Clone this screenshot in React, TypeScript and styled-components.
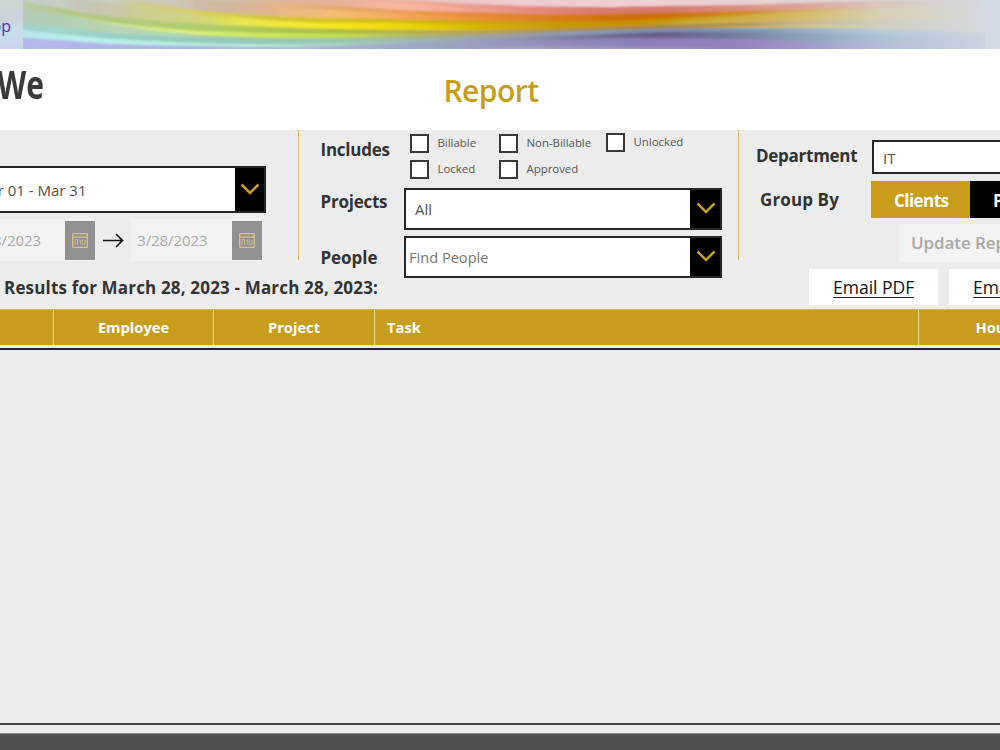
import React from 'react';
import styled, { createGlobalStyle } from 'styled-components';

const GOLD = '#c89d1b';

const Global = createGlobalStyle`
  *, *::before, *::after { box-sizing: border-box; }
  html, body { margin: 0; padding: 0; }
  body { width: 1000px; height: 750px; overflow: hidden; background: #ececec;
    font-family: "Open Sans", "Noto Sans", sans-serif; color: #333; }
`;

const Page = styled.div`
  width: 1000px; height: 750px; overflow: hidden;
  display: flex; flex-direction: column; background: #ececec;
`;

/* ---------- banner ---------- */

const Banner = styled.header`
  display: grid; height: 49px; flex: none; overflow: hidden;
  > * { grid-area: 1 / 1; }
`;
const BannerArt = styled.svg`display: block; width: 1000px; height: 49px;`;
const BannerLink = styled.span`
  justify-self: start; width: 11px; display: flex; justify-content: flex-end;
  font-size: 16px; line-height: 22px; margin-top: 15px; color: #5a2db0;
`;

type Stop = [x: number, y: number, color: string, opacity?: number];

const bands: Stop[][] = [
  [[23, -3, '#c4cdc8'], [113, -3, '#cdcfc4'], [220, -3, '#cdc4b0'], [340, -3, '#dfbcac'], [500, -3, '#ecccd0'], [660, -3, '#efd0d3'], [800, -3, '#dfd4d5'], [900, -3, '#d6d8d8'], [985, -3, '#d4dadf']],
  [[60, -4, '#c0b49c', 0], [90, 0, '#c4bca0', .5], [130, 6, '#c8c4a4', .6], [200, 14, '#ccc49c', .5], [280, 16, '#d8bc94', 0]],
  [[170, -6, '#ccb09c', 0], [215, 1, '#ccb098', .6], [260, 4, '#d8b094', .5], [330, 8, '#e4b090', 0]],
  [[210, -6, '#d4b494', 0], [290, -3, '#deb49c'], [403, 0, '#f2b09c'], [450, 3, '#eea090'], [530, 6, '#e28c80'], [600, 7, '#d87c6e'], [660, 6, '#d67a6a'], [740, 5, '#dc8e7e'], [800, 3, '#dca498'], [880, 1, '#dac4ba'], [985, -1, '#d4dadf']],
  [[340, 2, '#f4b8a4', 0], [403, 3, '#f8b8a4', .9], [460, 7, '#f4aa94', .8], [530, 9, '#e8907c', .5], [600, 10, '#d87c6e', 0]],
  [[233, -2, '#dcb890', 0], [290, 3, '#e8b480', .9], [340, 6, '#e2a868'], [400, 10, '#e8a058'], [460, 12, '#e88c38'], [530, 14, '#dc8024'], [600, 14, '#d07410'], [660, 13, '#cc6e00'], [740, 11, '#d08a28'], [800, 9, '#d8a868'], [880, 6, '#d8ccb8'], [985, 2, '#d4dadf']],
  [[270, 8, '#f0c890', 0], [330, 10, '#f4c078', 1], [400, 13, '#f4a858', 1], [460, 16, '#f09840', .9], [560, 17, '#dc8020', 0]],
  [[110, -4, '#c8c89c', 0], [145, 2, '#d0cc80', .8], [187, 9, '#d8d060', .9], [233, 13, '#d4cc4c'], [300, 17, '#d4c430'], [340, 18, '#d8c41c'], [430, 20, '#d0b010'], [530, 21, '#c8a008'], [600, 21, '#c49400'], [660, 19, '#c89400'], [740, 15, '#ccac38'], [800, 12, '#d4bc64'], [880, 10, '#d6cfb4'], [985, 8, '#d4dadf']],
  [[120, 1, '#ccd094', 0], [150, 7, '#ccd090', .9], [187, 13, '#d0d488', .9], [233, 19, '#d8dc60', .9], [290, 24, '#e8e040', .4], [330, 26, '#f0e030', 0]],
  [[210, 13, '#ece848', 0], [245, 18, '#ece850', .9], [300, 22, '#f4e82c', 1], [340, 23, '#f8e41c', 1], [400, 23, '#ecd808', 1], [460, 24, '#dcc000', 1], [560, 25, '#c8a408', 0]],
  [[640, 22, '#b8a040', 0], [680, 21, '#c8ac40', .8], [760, 18, '#d0b060', .8], [860, 18, '#d8ccac', .5], [985, 18, '#d4dadf', 0]],
  [[23, 1, '#b8cca8'], [60, 8, '#b4c890'], [100, 15, '#b4c880'], [150, 20, '#b4cc78'], [200, 24, '#b0cc70'], [270, 27, '#acc850'], [340, 29, '#a8bc48'], [430, 30, '#b8ac50'], [500, 30, '#b89c5c'], [580, 28, '#b08c50'], [660, 25, '#a88450'], [740, 23, '#b09458'], [800, 21, '#c8b890'], [880, 20, '#d0cdc0'], [985, 22, '#d4dadf']],
  [[45, 10, '#c8e0a0', 0], [90, 19, '#c8e0a0', .9], [150, 27, '#d4ec84', 1], [200, 31, '#d8f078', 1], [270, 33, '#d0e858', 1], [340, 33.5, '#c8dc50', 1], [430, 33, '#b8b860', .6], [500, 33, '#a8a080', 0]],
  [[690, 26, '#d0b040', 0], [740, 26, '#d0b440', .8], [840, 26, '#d8d898', .8], [920, 28, '#d8dcc0', 0]],
  [[23, 8, '#b4ccb8'], [60, 14, '#b4ccb4'], [113, 25, '#b8d4b4'], [160, 31, '#b4d8b0'], [200, 35, '#a8d0a8'], [260, 37.5, '#98c4a0'], [340, 38, '#9cc494'], [430, 36, '#a0b098'], [500, 34, '#9ca0a0'], [580, 31, '#8898b0'], [660, 29, '#7890b4'], [740, 28, '#7c94b4'], [800, 28, '#98acc4'], [880, 29, '#b8c8d8'], [985, 33, '#ccd4e0']],
  [[23, 24, '#a4d0cc'], [60, 27, '#a0d4cc'], [113, 33, '#98d0c8'], [180, 37, '#94ccc0'], [260, 39, '#94c8b8'], [340, 39, '#98c8ac'], [430, 39, '#9cb8b0', .6], [500, 38, '#9ca8b0', 0]],
  [[23, 30, '#b8e4e8'], [60, 34, '#b8ecec'], [113, 39, '#b8f0e8'], [200, 43, '#b8f0dc'], [280, 44, '#b4e8d0'], [340, 43, '#a8d0bc'], [430, 40, '#9cb0b8'], [500, 38, '#9498b4'], [580, 35, '#787898'], [660, 32, '#685c88'], [740, 32, '#74809e'], [800, 33, '#8ca2b6'], [880, 35, '#b0c0d4'], [985, 38, '#ccd4e0']],
  [[23, 38, '#b4b8e8'], [60, 40, '#b4b8ec'], [113, 44, '#b0b4e8'], [200, 46, '#acb0e4'], [280, 47, '#b0b4e4'], [340, 46, '#a8b0d4'], [430, 42, '#9ca8c0'], [500, 40, '#9898bc'], [580, 39, '#8c84b8'], [660, 38, '#8c7cb8'], [740, 39, '#9484bc'], [800, 41, '#a098c8'], [880, 44, '#b4bcd8'], [985, 47, '#ccd4e0']],
  [[440, 49, '#a0a8bc', 0], [520, 46, '#a4a8bc', .8], [620, 46, '#9c98b8', .8], [680, 47, '#a8a0b8', .6], [760, 49, '#948cc0', 0]],
];

function bandPath(pts: Stop[]) {
  let d = `M${pts[0][0]} 52L${pts[0][0]} ${pts[0][1]}`;
  for (let i = 0; i < pts.length - 1; i++) {
    const a = pts[Math.max(0, i - 1)], b = pts[i], c = pts[i + 1], e = pts[Math.min(pts.length - 1, i + 2)];
    d += `C${b[0] + (c[0] - b[0]) / 3} ${b[1] + ((c[1] - a[1]) / (c[0] - a[0])) * (c[0] - b[0]) / 3} ${c[0] - (c[0] - b[0]) / 3} ${c[1] - ((e[1] - b[1]) / (e[0] - b[0])) * (c[0] - b[0]) / 3} ${c[0]} ${c[1]}`;
  }
  return `${d}V52Z`;
}

function Waves() {
  return (
    <BannerArt viewBox="0 0 1000 49">
      <defs>
        <filter id="soft" x="0" y="-10%" width="100%" height="120%"><feGaussianBlur stdDeviation="0.5 0.8" /></filter>
        <linearGradient id="left" x2="0" y2="1">
          <stop offset="0" stopColor="#ccd6d4" /><stop offset=".4" stopColor="#ccd2da" />
          <stop offset=".65" stopColor="#c6dfea" /><stop offset="1" stopColor="#cbd2ea" />
        </linearGradient>
        <clipPath id="middle"><rect x="23" width="962" height="49" /></clipPath>
        {bands.map((b, i) => {
          const x0 = b[0][0], x1 = b[b.length - 1][0];
          return (
            <linearGradient key={i} id={`band${i}`} gradientUnits="userSpaceOnUse" x1={x0} x2={x1} y1="0" y2="0">
              {b.map((s, j) => <stop key={j} offset={(s[0] - x0) / (x1 - x0)} stopColor={s[2]} stopOpacity={s[3] ?? 1} />)}
            </linearGradient>
          );
        })}
      </defs>
      <rect width="1000" height="49" fill="#d5dbe2" />
      <rect width="24" height="49" fill="url(#left)" />
      <g clipPath="url(#middle)">
        <g filter="url(#soft)">
          {bands.map((b, i) => <path key={i} d={bandPath(b)} fill={`url(#band${i})`} />)}
        </g>
      </g>
    </BannerArt>
  );
}

/* ---------- title ---------- */

const TitleBar = styled.div`
  flex: none; height: 81px; background: #fff;
  display: grid; grid-template-columns: 400px 182px 1fr; align-items: start;
`;
const Brand = styled.div`
  width: 44px; display: flex; justify-content: flex-end; white-space: nowrap;
  font-size: 39px; font-weight: 700; line-height: 50px; margin-top: 10px; color: #3a3a3a;
  transform: scaleX(.77); transform-origin: right;
`;
const Title = styled.h1`
  margin: 19px 0 0; text-align: center; font-size: 30px; line-height: 46px;
  font-weight: 600; color: ${GOLD}; letter-spacing: -.5px;
`;

/* ---------- filters ---------- */

const Filters = styled.section`
  flex: none; height: 139px; display: grid; grid-template-columns: 299px 440px 1fr; align-items: start;
`;
const Column = styled.div<{ $divided?: boolean }>`
  height: 130px; display: flex; flex-direction: column;
  border-right: ${p => (p.$divided ? '1px solid #dcb95e' : 'none')};
`;
const Label = styled.div<{ $w: number; $top?: number; $track?: number }>`
  flex: none; width: ${p => p.$w}px; padding-top: ${p => p.$top ?? 0}px;
  font-size: 17px; line-height: 24px; font-weight: 700; letter-spacing: ${p => p.$track ?? -.24}px; white-space: nowrap;
`;
const Select = styled.div<{ $h: number }>`
  flex: none; height: ${p => p.$h}px; display: flex; background: #fff; border: 2px solid #262626;
`;
const Value = styled.div<{ $pad?: number; $muted?: boolean; $size?: number; $drop?: number }>`
  flex: 1; padding-left: ${p => p.$pad ?? 9}px; padding-top: ${p => p.$drop ?? 0}px; display: flex; align-items: center;
  font-size: ${p => p.$size ?? 15}px; line-height: 20px; color: ${p => (p.$muted ? '#777' : '#505050')}; white-space: pre;
`;
const Toggle = styled.div`
  width: 30px; background: #000; display: flex; justify-content: center; align-items: center;
  svg { display: block; margin: 0 0 2px 1px; }
`;
const Chevron = () => (
  <svg width="20" height="12" viewBox="0 0 20 12" fill="none" stroke={GOLD} strokeWidth="2.5">
    <path d="M1.5 1.5L10 10L18.5 1.5" />
  </svg>
);

const RangeSelect = styled(Select)`
  width: 266px; margin-top: 36px; border-left: 0;
  ${Toggle} { width: 29px; }
`;
const RangeValue = styled.div`
  width: 86.5px; display: flex; justify-content: flex-end; align-items: center; margin-right: auto;
  font-size: 15px; line-height: 20px; color: #505050; white-space: pre;
`;
const Dates = styled.div`display: flex; flex: none; align-items: center; margin-top: 6px; height: 42px;`;
const DateField = styled.div<{ $w: number; $text: number }>`
  width: ${p => p.$w}px; height: 42px; background: #f3f3f3; display: flex; align-items: center;
  > span { width: ${p => p.$text}px; display: flex; justify-content: flex-end; margin-right: auto;
    font-size: 15px; color: #aaa; white-space: nowrap; letter-spacing: -.08px; }
`;
const DateButton = styled.div`
  width: 30px; height: 39px; background: #919191; display: flex; align-items: center; justify-content: center;
`;
const CalendarIcon = () => (
  <svg width="16" height="15" viewBox="0 0 16 15" fill="none" stroke="#d6c48e" strokeWidth="1.3">
    <rect x=".7" y=".7" width="14.6" height="13.6" rx=".5" />
    <path d="M.6 4.1H15.4" />
    <path d="M3 12V6.5H5.5V12M7 7.2H8.7V12M10.3 6.5V11.5H13V6.5" strokeWidth="1" strokeDasharray="1.6 .5" />
  </svg>
);
const Arrow = styled.svg`width: 21px; height: 15px; margin: 0 7px 0 8px; flex: none;`;

const FilterRow = styled.div<{ $h: number; $gap?: number }>`
  flex: none; height: ${p => p.$h}px; margin-top: ${p => p.$gap ?? 0}px; padding-left: 21.5px; display: flex;
  ${Select} { width: 318px; }
`;
const Checks = styled.div`
  display: grid; grid-template-columns: 89px 107px 90px; grid-template-rows: 26px 26px; padding-top: 4px;
`;
const Check = styled.div<{ $dy?: number }>`
  display: flex; align-items: flex-start; margin-top: ${p => p.$dy ?? 0}px;
  font-size: 11.4px; line-height: 18px; color: #555; white-space: nowrap;
  &::before { content: ''; width: 19px; height: 19px; margin-right: 9px; background: #fff; border: 2px solid #383838; }
`;

const SideRow = styled.div<{ $pad: number; $gap: number; $h: number }>`
  flex: none; display: flex; padding-left: ${p => p.$pad}px; margin-top: ${p => p.$gap}px; height: ${p => p.$h}px;
`;
const DeptSelect = styled(Select)`width: 180px;`;
const Segment = styled.div<{ $on?: boolean }>`
  flex: none; width: 99px; height: 37px; display: flex; align-items: center; padding: 2px 0 0 23px;
  background: ${p => (p.$on ? GOLD : '#000')}; color: #fff;
  font-size: 17px; font-weight: 700; letter-spacing: -.55px;
`;
const Update = styled.div`
  flex: none; width: 150px; height: 38px; background: #f3f3f3; color: #a8a8a8; padding: 0 0 2px 12px;
  display: flex; align-items: center; font-size: 17px; font-weight: 600; letter-spacing: -.08px; white-space: nowrap;
`;

/* ---------- results ---------- */

const ResultsBar = styled.div`
  flex: none; height: 40px; display: flex; align-items: flex-start;
`;
const Summary = styled.h2`
  flex: none; margin: 7px 0 0 4px; width: 805px; font-size: 17px; line-height: 24px; font-weight: 700;
  letter-spacing: .17px; white-space: nowrap;
`;
const Export = styled.div<{ $w: number }>`
  flex: none; width: ${p => p.$w}px; height: 36px; margin-right: 11px; padding: 2px 0 0 24px; background: #fff;
  display: flex; align-items: center; color: #111; font-size: 17.5px; font-weight: 500; white-space: nowrap;
  span { border-bottom: 1px solid #222; line-height: 19px; height: 20px; }
`;

const TableHead = styled.div`
  flex: none; height: 36px; background: ${GOLD}; border-top: 1px solid #d6b65a;
  display: grid; grid-template-columns: 54px 160px 161px 543.5px 1fr;
  color: #fff; font-size: 14.7px; font-weight: 700; line-height: 35px;
`;
const Th = styled.div<{ $align?: 'left'; $pad?: number }>`
  border-right: 1px solid #e9d9a6; text-align: ${p => p.$align ?? 'center'};
  padding-left: ${p => p.$pad ?? 0}px; white-space: nowrap;
`;
const TableBody = styled.div`
  flex: none; height: 377px; margin-top: 3px; border-top: 2px solid #222; border-bottom: 2px solid #444;
`;
const Footer = styled.footer`
  flex: 1; margin-top: 8px; background: #505050; border-top: 1px solid #8e8e8e;
`;

export default function App() {
  return (
    <Page>
      <Global />
      <Banner>
        <Waves />
        <BannerLink>App</BannerLink>
      </Banner>
      <TitleBar>
        <Brand>We</Brand>
        <Title>Report</Title>
      </TitleBar>
      <Filters>
        <Column $divided>
          <RangeSelect $h={47}>
            <RangeValue>Mar 01 - Mar 31</RangeValue>
            <Toggle><Chevron /></Toggle>
          </RangeSelect>
          <Dates>
            <DateField $w={95} $text={41}><span>3/28/2023</span><DateButton><CalendarIcon /></DateButton></DateField>
            <Arrow viewBox="0 0 21 15" fill="none" stroke="#111" strokeWidth="1.7"><path d="M0 7.5H19.5M13 1L19.5 7.5L13 14" /></Arrow>
            <DateField $w={131} $text={76.5}><span>3/28/2023</span><DateButton><CalendarIcon /></DateButton></DateField>
          </Dates>
        </Column>
        <Column $divided>
          <FilterRow $h={58}>
            <Label $w={89} $top={8}>Includes</Label>
            <Checks>
              <Check>Billable</Check><Check>Non-Billable</Check><Check $dy={-1}>Unlocked</Check>
              <Check>Locked</Check><Check>Approved</Check>
            </Checks>
          </FilterRow>
          <FilterRow $h={42}>
            <Label $w={83.5} $top={2}>Projects</Label>
            <Select $h={42}><Value>All</Value><Toggle><Chevron /></Toggle></Select>
          </FilterRow>
          <FilterRow $h={42} $gap={6}>
            <Label $w={83.5} $top={10} $track={-.05}>People</Label>
            <Select $h={42}><Value $pad={3} $muted $size={14.6}>Find People</Value><Toggle><Chevron /></Toggle></Select>
          </FilterRow>
        </Column>
        <Column>
          <SideRow $pad={17} $gap={10} $h={34}>
            <Label $w={116} $top={4} $track={-.27}>Department</Label>
            <DeptSelect $h={34}><Value $drop={1}>IT</Value></DeptSelect>
          </SideRow>
          <SideRow $pad={21} $gap={7} $h={37}>
            <Label $w={111} $top={7} $track={.12}>Group By</Label>
            <Segment $on>Clients</Segment><Segment>Projects</Segment>
          </SideRow>
          <SideRow $pad={160} $gap={6} $h={38}><Update>Update Report</Update></SideRow>
        </Column>
      </Filters>
      <ResultsBar>
        <Summary>Results for March 28, 2023 - March 28, 2023:</Summary>
        <Export $w={129}><span>Email PDF</span></Export>
        <Export $w={140}><span>Email Excel</span></Export>
      </ResultsBar>
      <TableHead>
        <Th />
        <Th>Employee</Th>
        <Th>Project</Th>
        <Th $align="left" $pad={12}>Task</Th>
        <Th $align="left" $pad={57}>Hours</Th>
      </TableHead>
      <TableBody />
      <Footer />
    </Page>
  );
}
